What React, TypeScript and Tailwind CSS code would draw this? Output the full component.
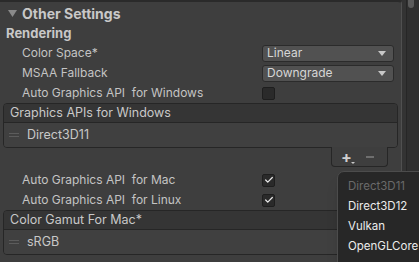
import { Check } from 'lucide-react';

function Dropdown({ value }: { value: string }) {
  return (
    <div className="flex h-[17px] w-[132px] items-center justify-between rounded-[3px] border border-[#2b2b2b] bg-[#515151] pl-[4px] pr-[7px] text-[12px] text-[#d6d6d6]">
      <span>{value}</span>
      <svg width="8" height="5" viewBox="0 0 8 5">
        <path d="M0 0h8L4 5z" fill="#c8c8c8" />
      </svg>
    </div>
  );
}

function Toggle({ checked }: { checked?: boolean }) {
  return (
    <div className="flex h-[13px] w-[13px] items-center justify-center rounded-[2px] border border-[#1e1e1e] bg-[#2a2a2a]">
      {checked && <Check size={10} strokeWidth={3} color="#e8e8e8" />}
    </div>
  );
}

function Row({ label, children }: { label: string; children?: React.ReactNode }) {
  return (
    <div className="flex h-[20px] items-center">
      <div className="w-[262px] shrink-0 pl-[22px] text-[12px] text-[#c4c4c4] whitespace-pre">{label}</div>
      {children}
    </div>
  );
}

function ListBox({ title, item, footer }: { title: string; item: string; footer?: boolean }) {
  return (
    <div className="mr-[3px] ml-[3px]">
      <div className="overflow-hidden rounded-[4px] border border-[#262626]">
        <div className="flex h-[19px] items-center border-b border-[#262626] bg-[#353535] pl-[6px] text-[12.5px] text-[#c8c8c8]">
          {title}
        </div>
        <div className="flex h-[24px] items-center bg-[#404040]">
          <div className="ml-[5px] mr-[8px] flex w-[10px] flex-col gap-[2px]">
            <div className="h-px bg-[#5c5c5c]" />
            <div className="h-px bg-[#5c5c5c]" />
          </div>
          <span className="text-[12.5px] text-[#c8c8c8]">{item}</span>
        </div>
      </div>
      {footer && (
        <div className="flex justify-end pr-[10px]">
          <div className="-mt-px flex h-[20px] w-[57px] items-center justify-center gap-[14px] rounded-b-[4px] border border-t-0 border-[#262626] bg-[#3e3e3e] pr-[4px]">
            <div className="relative text-[16px] leading-none font-bold text-[#cfcfcf]">
              +
              <span className="absolute -right-[3px] bottom-[1px] h-0 w-0 border-x-[2px] border-t-[2px] border-x-transparent border-t-[#c8c8c8]" />
            </div>
            <div className="h-[2px] w-[8px] bg-[#6e6e6e]" />
          </div>
        </div>
      )}
    </div>
  );
}

export default function App() {
  return (
    <div
      className="relative flex h-[262px] w-[419px] overflow-hidden bg-[#2e2e2e]"
      style={{ fontFamily: 'Inter, "Liberation Sans", sans-serif' }}
    >
      {/* inspector panel */}
      <div className="flex h-full w-[402px] flex-col rounded-tr-[4px] border-t-2 border-r border-[#2a2a2a] border-r-[#505050] bg-[#3e3e3e]">
        <div className="flex h-[22px] items-center pl-[8px]">
          <svg width="9" height="7" viewBox="0 0 9 7" className="mr-[5px]">
            <path d="M0 0h9L4.5 7z" fill="#8a8a8a" />
          </svg>
          <span className="text-[14px] font-bold text-[#c8c8c8]">Other Settings</span>
        </div>
        <div className="flex h-[19px] items-center pl-[6px] text-[13px] font-bold text-[#c8c8c8]">
          Rendering
        </div>
        <Row label="Color Space*">
          <Dropdown value="Linear" />
        </Row>
        <Row label="MSAA Fallback">
          <Dropdown value="Downgrade" />
        </Row>
        <Row label="Auto Graphics API  for Windows">
          <Toggle />
        </Row>
        <ListBox title="Graphics APIs for Windows" item="Direct3D11" footer />
        <div className="h-[3px]" />
        <Row label="Auto Graphics API  for Mac">
          <Toggle checked />
        </Row>
        <Row label="Auto Graphics API  for Linux">
          <Toggle checked />
        </Row>
        <ListBox title="Color Gamut For Mac*" item="sRGB" />
      </div>

      {/* side strip + scrollbar */}
      <div className="h-full w-[5px] border-r border-[#262626] bg-[#333333]" />
      <div className="h-full w-[11px] bg-[#2f2f2f] pl-[1px]">
        <div className="h-[8px] w-[6px] rounded-b-[3px] bg-[#5a5a5a]" />
      </div>

      {/* popup menu */}
      <div className="absolute top-[171px] left-[337px] h-[110px] w-[130px] rounded-[7px] border border-[#4c4c4c] bg-[#272727] pt-[5px] pl-[10px] text-[11.5px] font-normal whitespace-nowrap shadow-lg">
        <div className="flex h-[20px] items-center text-[#6a6a6a]">Direct3D11</div>
        <div className="flex h-[20px] items-center text-[#ececec]">Direct3D12</div>
        <div className="flex h-[20px] items-center text-[#ececec]">Vulkan</div>
        <div className="flex h-[20px] items-center text-[#ececec]">OpenGLCore (</div>
      </div>
    </div>
  );
}
